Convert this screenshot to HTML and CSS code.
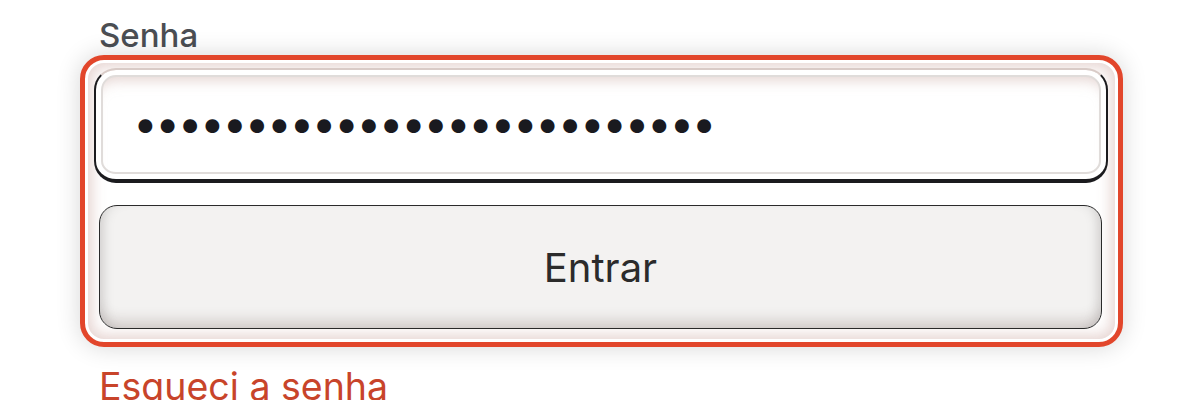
FILE: index.html
```html
<!DOCTYPE html>
<html lang="pt-BR">
<head>
<meta charset="utf-8">
<title>Login</title>
<link rel="stylesheet" href="styles.css">
</head>
<body>
<form class="page">
  <label class="label" for="pw">Senha</label>
  <div class="frame">
    <input class="input" id="pw" type="password" value="abcdefghijklmnopqrstuvwxyz">
    <button class="button" type="button">Entrar</button>
  </div>
  <a class="forgot" href="#">Esqueci a senha</a>
</form>
</body>
</html>
```
FILE: styles.css
```css
html, body {
  margin: 0;
  background: #ffffff;
}
body {
  font-family: Inter, "Noto Sans", sans-serif;
}
.page {
  display: flex;
  flex-direction: column;
  width: 1043px;
  margin-left: 80px;
}
.label {
  margin-left: 19px;
  margin-top: 15px;
  font-size: 33px;
  font-weight: 500;
  line-height: 40px;
  color: #4b4e53;
  height: 40px;
}
.frame {
  display: flex;
  flex-direction: column;
  gap: 22px;
  height: 292px;
  box-sizing: border-box;
  padding: 8px 10px 13px 9px;
  border: 5px solid #e2462b;
  border-radius: 24px;
  background: #ffffff;
  box-shadow: 0 0 24px rgba(0, 0, 0, 0.16),
              inset 0 0 0 3px #ffffff,
              inset 0 0 14px 7px rgba(200, 160, 152, 0.45);
}
.input {
  height: 115px;
  box-sizing: border-box;
  margin: 0;
  padding: 0 0 4px 37px;
  border: 2px solid #1b1b1e;
  border-top-color: #d9cbc7;
  border-bottom-width: 4px;
  border-radius: 22px;
  background: #ffffff;
  font-family: Inter, sans-serif;
  font-size: 44px;
  letter-spacing: -2.4px;
  color: #1a1a1f;
  outline: none;
  box-shadow: inset 0 0 0 5px #ffffff,
              inset 0 0 0 7px #e0dcda,
              inset 0 14px 14px -4px rgba(205, 175, 170, 0.55);
}
.button {
  height: 124px;
  margin: 0 6px 0 5px;
  border: 1.5px solid #2a2a2a;
  border-radius: 18px;
  background: #f3f2f1;
  font-family: Inter, sans-serif;
  font-size: 40px;
  color: #2b2b2b;
  box-shadow: inset 0 -12px 14px -4px rgba(60, 30, 25, 0.16),
              inset 10px 0 12px -6px rgba(0, 0, 0, 0.1),
              inset -10px 0 12px -6px rgba(0, 0, 0, 0.1);
}
.forgot {
  margin-left: 19px;
  margin-top: 18px;
  font-size: 37.5px;
  line-height: 44px;
  color: #c8442a;
  text-decoration: none;
}
```
